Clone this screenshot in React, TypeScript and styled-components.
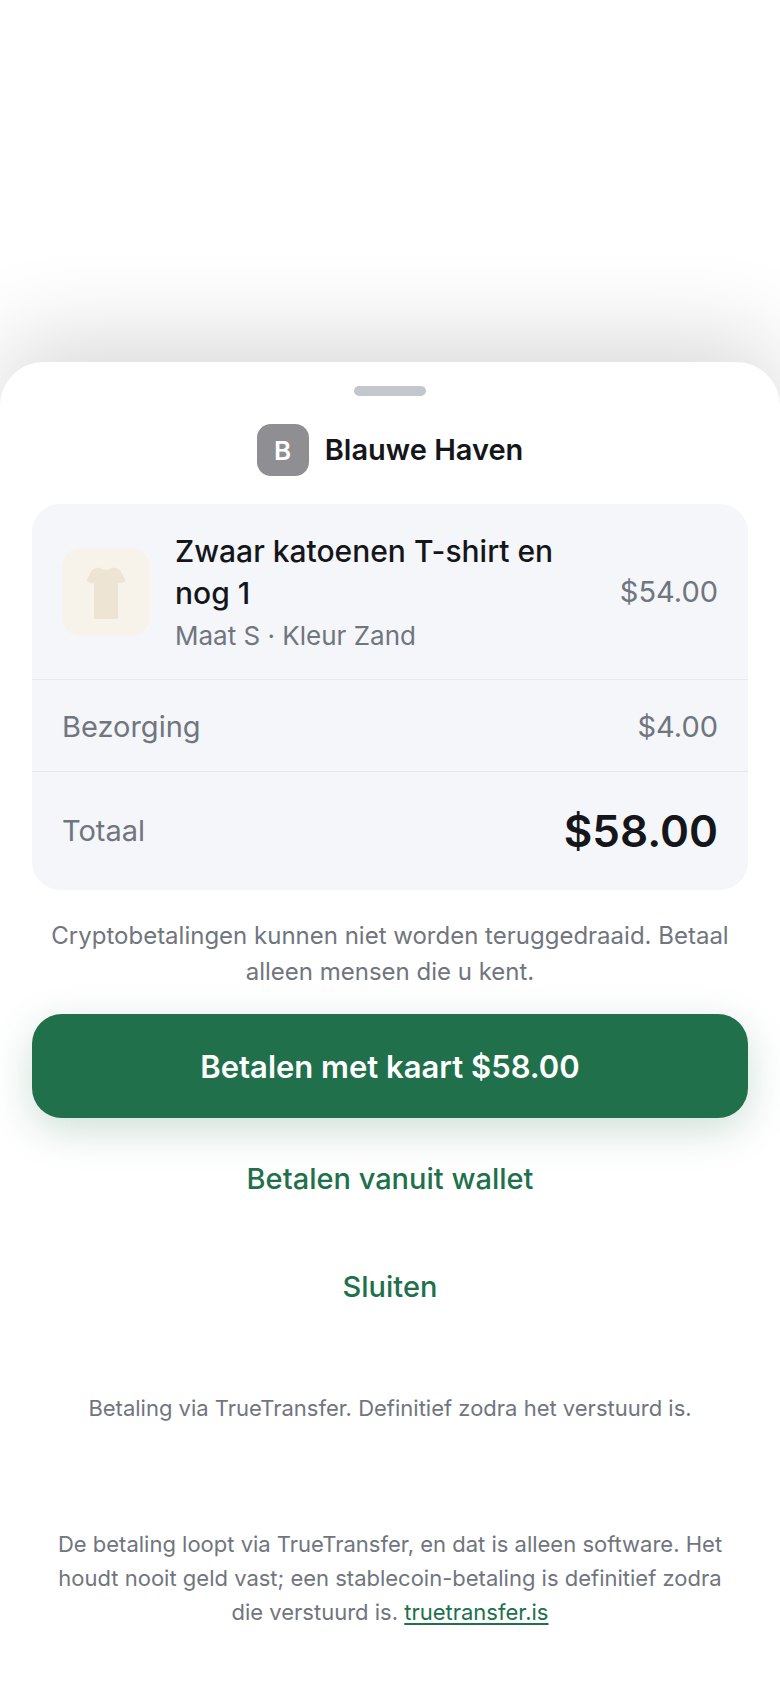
import React from "react";
import styled, { createGlobalStyle } from "styled-components";

const color = {
  ink: "#14161a",
  muted: "#70757e",
  card: "#f4f6fa",
  line: "#e4e7eb",
  green: "#20704b",
};

const GlobalStyle = createGlobalStyle`
  *, *::before, *::after { box-sizing: border-box; }
  body {
    margin: 0;
    background: #fff;
    color: ${color.ink};
    font-family: Inter, "Liberation Sans", sans-serif;
    -webkit-font-smoothing: antialiased;
  }
  h1, h2, p, dl, dt, dd { margin: 0; font-weight: 400; }
`;

const Page = styled.div`
  display: flex;
  flex-direction: column;
  justify-content: flex-end;
  min-height: 100vh;
  overflow: hidden;
`;

const Sheet = styled.main`
  display: flex;
  flex-direction: column;
  padding: 24px 32px 59px;
  border-radius: 44px 44px 0 0;
  background: #fff;
  box-shadow: 0 -24px 90px rgba(0, 0, 0, 0.15);
`;

const Handle = styled.div`
  align-self: center;
  width: 72px;
  height: 10px;
  border-radius: 5px;
  background: #c3c6cc;
`;

const Merchant = styled.header`
  display: flex;
  align-items: center;
  justify-content: center;
  gap: 16px;
  margin: 28px 0;
`;

const Avatar = styled.span`
  display: grid;
  place-items: center;
  width: 52px;
  height: 52px;
  border-radius: 14px;
  background: #8e8e93;
  color: #fff;
  font-size: 26px;
  font-weight: 600;
`;

const MerchantName = styled.h1`
  font-size: 29px;
  font-weight: 600;
  line-height: 52px;
`;

const Card = styled.section`
  border-radius: 28px;
  background: ${color.card};
`;

const ItemRow = styled.div`
  display: flex;
  align-items: center;
  gap: 25px;
  padding: 26px 30px 25px;
  border-bottom: 1px solid ${color.line};
`;

const Thumb = styled.div`
  flex: none;
  width: 88px;
  height: 88px;
  border-radius: 20px;
  background: #f7f2ea;
`;

const ItemText = styled.div`
  flex: 1;
  min-width: 0;
`;

const ItemTitle = styled.h2`
  max-width: 400px;
  font-size: 30px;
  font-weight: 500;
  line-height: 42px;
`;

const ItemMeta = styled.p`
  margin-top: 4px;
  color: ${color.muted};
  font-size: 26px;
  line-height: 36px;
`;

const Price = styled.span`
  color: ${color.muted};
  font-size: 29px;
  line-height: 36px;
`;

const Summary = styled.dl``;

const SummaryRow = styled.div<{ $total?: boolean }>`
  display: flex;
  align-items: center;
  justify-content: space-between;
  padding: ${(p) => (p.$total ? "32px 30px" : "29px 30px 26px")};
  border-bottom: ${(p) => (p.$total ? "none" : `1px solid ${color.line}`)};
  line-height: ${(p) => (p.$total ? "54px" : "36px")};
`;

const Label = styled.dt`
  color: ${color.muted};
  font-size: 29px;
`;

const Amount = styled.dd<{ $total?: boolean }>`
  color: ${(p) => (p.$total ? color.ink : color.muted)};
  font-size: ${(p) => (p.$total ? "44px" : "29px")};
  font-weight: ${(p) => (p.$total ? 600 : 400)};
`;

const Warning = styled.p`
  margin: 28px 0 24px;
  color: ${color.muted};
  font-size: 24px;
  line-height: 36px;
  text-align: center;
`;

const Actions = styled.div`
  display: flex;
  flex-direction: column;
  gap: 12px;
`;

const Button = styled.button`
  border: 0;
  border-radius: 30px;
  font-family: inherit;
  cursor: pointer;
`;

const PrimaryButton = styled(Button)`
  min-height: 104px;
  background: ${color.green};
  color: #fff;
  font-size: 31px;
  font-weight: 600;
  box-shadow: 0 12px 40px rgba(32, 112, 75, 0.22);
`;

const TextButton = styled(Button)`
  min-height: 96px;
  background: transparent;
  color: ${color.green};
  font-size: 29px;
  font-weight: 500;
`;

const FinePrint = styled.p`
  margin-top: 57px;
  color: ${color.muted};
  font-size: 22px;
  line-height: 34px;
  text-align: center;
`;

const Legal = styled.footer`
  margin-top: 102px;
  padding: 0 16px;
  color: ${color.muted};
  font-size: 22px;
  line-height: 34px;
  text-align: center;
`;

const Link = styled.a`
  color: ${color.green};
  text-decoration: underline;
  text-decoration-thickness: 2px;
  text-underline-offset: 3px;
`;

function Shirt() {
  return (
    <svg width="88" height="88" viewBox="0 0 88 88" aria-hidden="true">
      <path
        d="M37.5 19.5C40.5 22.8 47.5 22.8 50.5 19.5C54.5 20 57.5 21 59 24L63.5 32.5C61.5 34.6 59 35.6 56 35.3V69.5Q56 71 54.5 71H33.500Q32 71 32 69.5V35.3C29 35.6 26.5 34.6 24.5 32.5L29 24C30.5 21 33.5 20 37.5 19.5Z"
        fill="#ede4d3"
      />
    </svg>
  );
}

export default function App() {
  return (
    <Page>
      <GlobalStyle />
      <Sheet>
        <Handle />
        <Merchant>
          <Avatar aria-hidden="true">B</Avatar>
          <MerchantName>Blauwe Haven</MerchantName>
        </Merchant>

        <Card>
          <ItemRow>
            <Thumb>
              <Shirt />
            </Thumb>
            <ItemText>
              <ItemTitle>Zwaar katoenen T-shirt en nog 1</ItemTitle>
              <ItemMeta>Maat S · Kleur Zand</ItemMeta>
            </ItemText>
            <Price>$54.00</Price>
          </ItemRow>
          <Summary>
            <SummaryRow>
              <Label>Bezorging</Label>
              <Amount>$4.00</Amount>
            </SummaryRow>
            <SummaryRow $total>
              <Label>Totaal</Label>
              <Amount $total>$58.00</Amount>
            </SummaryRow>
          </Summary>
        </Card>

        <Warning>
          Cryptobetalingen kunnen niet worden teruggedraaid. Betaal alleen mensen die u kent.
        </Warning>

        <Actions>
          <PrimaryButton type="button">Betalen met kaart $58.00</PrimaryButton>
          <TextButton type="button">Betalen vanuit wallet</TextButton>
          <TextButton type="button">Sluiten</TextButton>
        </Actions>

        <FinePrint>Betaling via TrueTransfer. Definitief zodra het verstuurd is.</FinePrint>

        <Legal>
          De betaling loopt via TrueTransfer, en dat is alleen software. Het houdt nooit geld vast;
          een stablecoin-betaling is definitief zodra die verstuurd is.{" "}
          <Link href="https://truetransfer.is">truetransfer.is</Link>
        </Legal>
      </Sheet>
    </Page>
  );
}
